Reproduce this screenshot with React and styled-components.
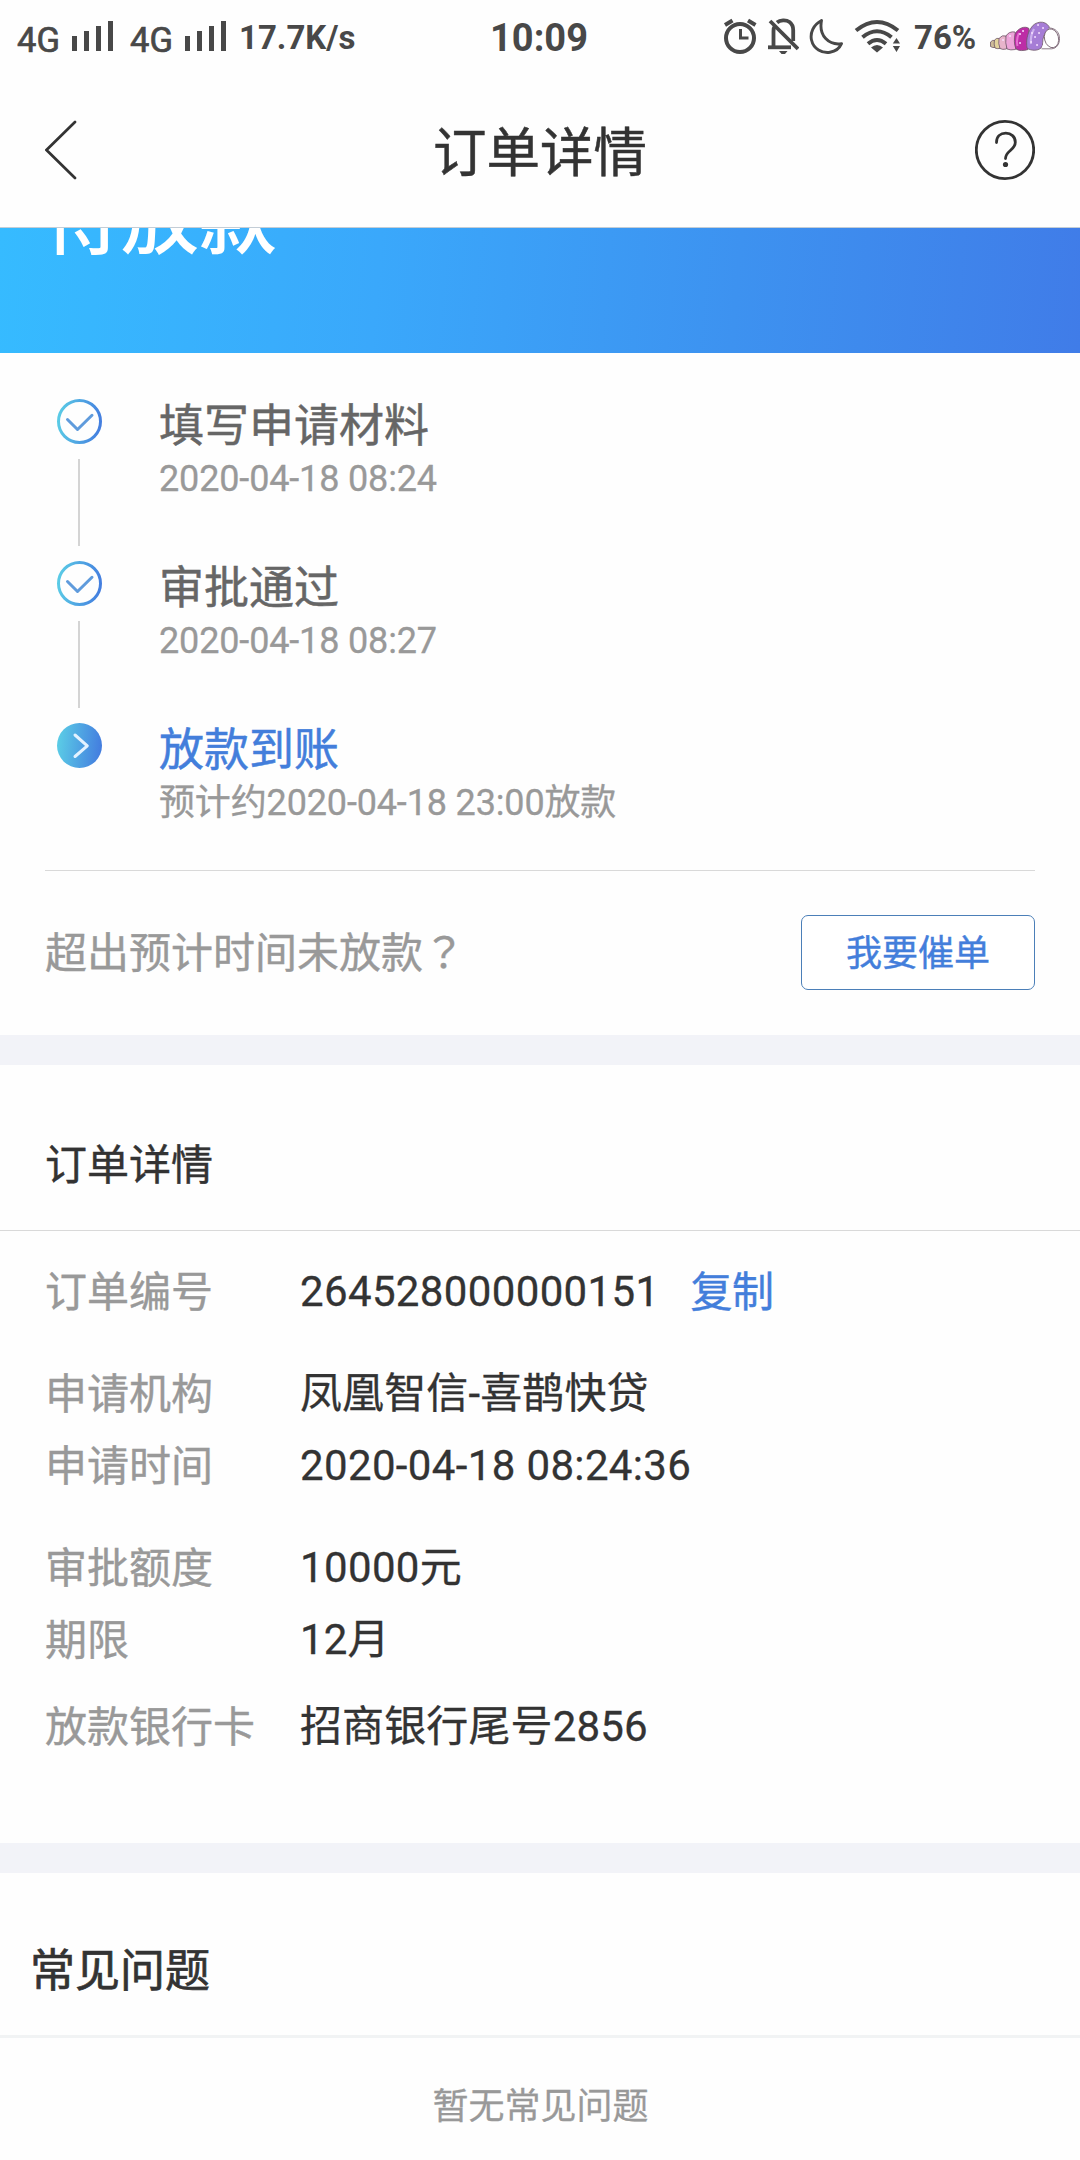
import React from "react";
import styled, { createGlobalStyle } from "styled-components";

const Global = createGlobalStyle`
  * { box-sizing: border-box; }
  body { margin: 0; background: #fefefe; }
`;

const Page = styled.div`
  width: 1080px;
  height: 2160px;
  overflow: hidden;
  display: flex;
  flex-direction: column;
  background: #fefefe;
  color: #333;
  font-family: Roboto, "Noto Sans CJK SC", sans-serif;
  white-space: nowrap;
`;

const StatusBar = styled.div`
  height: 75px;
  flex: none;
  display: grid;
  grid-template-columns: 1fr auto 1fr;
  align-items: start;
  padding: 0 20px 0 17px;
  color: #484848;
`;

const StatusSide = styled.div`
  display: flex;
  align-items: flex-start;
  justify-content: ${(p) => (p.$end ? "flex-end" : "flex-start")};
  height: 75px;
`;

const StatusText = styled.span`
  font-size: ${(p) => p.$size}px;
  font-weight: ${(p) => p.$weight || 700};
  line-height: 76px;
  width: ${(p) => (p.$width ? `${p.$width}px` : "auto")};
  margin-left: ${(p) => p.$gap || 0}px;
`;

const NetworkText = styled(StatusText)`
  line-height: 80px;
  -webkit-text-stroke: 0.7px #484848;
`;

const SignalBars = styled.div`
  display: flex;
  align-items: flex-end;
  gap: 7px;
  height: 51px;
  margin: 0 17px 0 11px;
`;

const SignalBar = styled.i`
  width: 5px;
  height: ${(p) => p.$h}px;
  background: #484848;
`;

const StatusIcon = styled.svg`
  display: block;
  flex: none;
  height: 75px;
  width: ${(p) => p.$w}px;
  margin-left: ${(p) => p.$gap || 0}px;
  fill: none;
  stroke: #484848;
`;

const NavBar = styled.header`
  flex: none;
  height: 153px;
  display: grid;
  grid-template-columns: 60px 1fr 60px;
  align-items: start;
  padding: 0 45px;
  border-bottom: 1px solid #c3cdd6;
`;

const NavIcon = styled.svg`
  display: block;
  width: 60px;
  height: 150px;
  fill: none;
  stroke: #333;
`;

const NavTitle = styled.h1`
  margin: 0;
  font-size: 53.5px;
  font-weight: 400;
  line-height: 158px;
  text-align: center;
  -webkit-text-stroke: 0.5px #333;
`;

const Banner = styled.section`
  flex: none;
  height: 125px;
  overflow: hidden;
  padding: 0 43px;
  background: linear-gradient(95deg, #36bbff 0%, #3aa8fb 35%, #3d92f0 68%, #407ce8 100%);
`;

const BannerTitle = styled.h2`
  margin: -45px 0 0;
  color: #fff;
  font-size: 78px;
  font-weight: 500;
  line-height: 78px;
`;

const Steps = styled.ol`
  flex: none;
  list-style: none;
  margin: 0;
  padding: 46px 57px 0;
  height: 517px;
`;

const Step = styled.li`
  display: flex;
  gap: 57px;
  height: 162px;
`;

const StepRail = styled.div`
  width: 45px;
  display: flex;
  flex-direction: column;
  align-items: center;
  gap: 15px;
`;

const StepMark = styled.svg`
  display: block;
  width: 45px;
  height: 45px;
  fill: none;
`;

const StepLine = styled.i`
  width: 2px;
  height: 87px;
  margin-right: 1px;
  background: #d4d4d4;
`;

const StepTitle = styled.div`
  font-size: 45px;
  line-height: 56px;
  color: ${(p) => (p.$active ? "#437edb" : "#666")};
  -webkit-text-stroke: 0.5px currentColor;
`;

const StepTime = styled.div`
  font-size: 36px;
  line-height: 49px;
  letter-spacing: -0.15px;
  color: #999;
  -webkit-text-stroke: 0.3px currentColor;
`;

const UrgeRow = styled.div`
  flex: none;
  height: 165px;
  margin: 0 45px;
  padding-top: 44px;
  border-top: 1px solid #d9d9d9;
  display: flex;
  justify-content: space-between;
  align-items: flex-start;
`;

const UrgeText = styled.span`
  font-size: 42px;
  line-height: 77px;
  color: #999;
  -webkit-text-stroke: 0.4px currentColor;
`;

const FullWidthMark = styled.span`
  font-family: "Noto Sans CJK TC", sans-serif;
  line-height: 1;
`;

const UrgeButton = styled.button`
  width: 234px;
  height: 75px;
  padding: 4px 0 0;
  border: 1px solid #4b7fb8;
  border-radius: 7px;
  background: #fff;
  color: #437edb;
  font: 400 36px/69px Roboto, "Noto Sans CJK SC", sans-serif;
  -webkit-text-stroke: 0.4px currentColor;
`;

const Band = styled.div`
  flex: none;
  height: 30px;
  background: #f2f3f8;
`;

const SectionTitle = styled.h3`
  flex: none;
  margin: 0;
  height: 166px;
  padding: 35px 45px 0;
  border-bottom: 1px solid #d9d9d9;
  font-size: 42px;
  font-weight: 400;
  line-height: 131px;
  -webkit-text-stroke: 0.4px currentColor;
`;

const Details = styled.dl`
  flex: none;
  margin: 0;
  height: 612px;
  padding: 25px 45px 0;
`;

const DetailRow = styled.div`
  display: flex;
  height: 72px;
  margin-bottom: ${(p) => p.$after || 0}px;
  font-size: 42px;
  line-height: 72px;
`;

const DetailLabel = styled.dt`
  width: 255px;
  line-height: 73px;
  color: #999;
  -webkit-text-stroke: 0.4px currentColor;
`;

const DetailValue = styled.dd`
  margin: 0;
  display: flex;
  letter-spacing: ${(p) => (p.$numeric ? 0.36 : 0.12)}px;
  -webkit-text-stroke: 0.3px currentColor;
`;

const CopyLink = styled.a`
  margin-left: 31px;
  line-height: 73px;
  letter-spacing: -0.5px;
  color: #437edb;
  -webkit-text-stroke: 0.4px currentColor;
`;

const FaqTitle = styled.h3`
  flex: none;
  margin: 0;
  height: 165px;
  padding: 36px 30px 0;
  border-bottom: 3px solid #f1f3f4;
  font-size: 45px;
  font-weight: 400;
  line-height: 125px;
  -webkit-text-stroke: 0.7px #333;
`;

const FaqEmpty = styled.p`
  margin: 0;
  padding: 15px 0 0 1px;
  font-size: 36px;
  line-height: 109px;
  text-align: center;
  color: #999;
  -webkit-text-stroke: 0.3px currentColor;
`;

const steps = [
  { title: "填写申请材料", time: "2020-04-18 08:24" },
  { title: "审批通过", time: "2020-04-18 08:27" },
  { title: "放款到账", time: "预计约2020-04-18 23:00放款", active: true },
];

const details = [
  { label: "订单编号", value: "264528000000151", numeric: true, copy: true, after: 30 },
  { label: "申请机构", value: "凤凰智信-喜鹊快贷" },
  { label: "申请时间", value: "2020-04-18 08:24:36", numeric: true, after: 30 },
  { label: "审批额度", value: "10000元", numeric: true },
  { label: "期限", value: "12月", after: 15 },
  { label: "放款银行卡", value: "招商银行尾号2856" },
];

function Signal() {
  return (
    <>
      <NetworkText $size={34.5} $weight={400} $width={44}>4G</NetworkText>
      <SignalBars>
        {[15, 20, 25, 30].map((h) => (
          <SignalBar key={h} $h={h} />
        ))}
      </SignalBars>
    </>
  );
}

function AlarmIcon() {
  return (
    <StatusIcon $w={34} viewBox="723 0 34 75" strokeWidth="4">
      <circle cx="740" cy="38" r="14" />
      <path d="M740.5 29v9h8" strokeWidth="3" />
      <path d="M725 25l7.500-4.500M748 20.500l7.500 4.500" />
    </StatusIcon>
  );
}

function MutedBellIcon() {
  return (
    <StatusIcon $w={32} $gap={10} viewBox="767 0 32 75" strokeWidth="3.8">
      <path d="M773.500 47V31q0-3 1.500-5M777 22.500c3-2.500 9-3 12.500-.5 2.500 2 3.700 4.500 3.700 8V41" />
      <path d="M768 47.300h23" />
      <path d="M770 21l28 28" />
      <path d="M779 51h8.500l-2.500 3h-3.500z" fill="#484848" stroke="none" />
    </StatusIcon>
  );
}

function MoonIcon() {
  return (
    <StatusIcon $w={34} $gap={10} viewBox="809 0 34 75" strokeWidth="2.9" strokeLinejoin="round">
      <path d="M821.500 20.500C813 25 810 33 811.500 40c2 9 10.500 13.500 18.500 12.300 5.500-.8 9.500-4 11.500-8.600C829 45.500 818.500 36 821.500 20.500z" />
    </StatusIcon>
  );
}

function WifiIcon() {
  return (
    <StatusIcon $w={46} $gap={11} viewBox="854 0 46 75" strokeWidth="4">
      <path d="M856 30.500q21-17 42 0M862.500 37.300q14.500-12 29 0M868 43.800q9-7.500 18 0" />
      <path d="M871 47.500q6-5 12 0l-6 5z" fill="#484848" stroke="none" />
      <path d="M892.800 43.500l3.700-5.500 3.500 5.500zM892.800 46l3.700 6 3.500-6z" fill="#484848" stroke="none" />
    </StatusIcon>
  );
}

function ShellBattery() {
  return (
    <StatusIcon $w={71} $gap={14} viewBox="989 0 71 75" strokeWidth="0.800">
      <g stroke="#6f5868">
        <path d="M990.500 42q2-2.500 4.500-1.500l.5 7q-3 .5-5-1z" fill="#cdbb98" />
        <path d="M994.500 40q2-2.500 5-1.500 2 5 .5 10-3 .5-5-.5-1.500-4-.5-8z" fill="#e2d29c" />
        <path d="M999 38.500q3-4 7-2.500 2.500 6 .5 13-4 1-6.500-.5-2-5-1-10z" fill="#e8b4cb" />
        <path d="M1006 36q3-5 9-4 3 8 .5 17.500-5 1-8.500-.5-2-6-1-13z" fill="#eda5d9" />
        <path d="M1015 34c3-6 10-8.500 14-5.500l-1 21c-4 1.500-9 1.500-12-.5-2-4.500-2-10-1-15z" fill="#bd2da6" />
        <path d="M1027 48c-1-7 0-14 4-20 4-7 14-8 18-1.500 1 3-3 5-5 9-2.500 6 0 9-3 12.500-3.500 3-10 3-14 0z" fill="#a67dd6" />
        <path d="M1049 28c6 0 10.500 4 10.500 10.500 0 6-3 10-8 10.300h-10" fill="#fff" />
        <ellipse cx="1051.500" cy="38.300" rx="7" ry="9.500" fill="#fff" transform="rotate(-14 1051.500 38.300)" />
      </g>
      <path d="M1019 33q-3 6-1.500 13" stroke="#e66fd0" strokeWidth="2" />
      <path d="M1034 29q-4 7-3 15" stroke="#cdb2ee" strokeWidth="2.200" />
      <g stroke="#f7e0ff" strokeLinecap="round" strokeWidth="1.800">
        <path d="M1032 33h.1M1038 25h.1M1043 28h.1M1035 37h.1M1039 33h.1M1031 42h.1M1037 45h.1M1020 34h.1M1023 31h.1M1020 43h.1M1010 36h.1M1003 40h.1" />
      </g>
    </StatusIcon>
  );
}

function StepIcon({ active, id }) {
  return (
    <StepMark viewBox="0 0 45 45" strokeLinecap="round" strokeLinejoin="round">
      <defs>
        <linearGradient id={id} gradientUnits="userSpaceOnUse" x1="0" y1="20" x2="45" y2="25">
          <stop offset="0" stopColor="#5bcde6" />
          <stop offset="1" stopColor="#437cdf" />
        </linearGradient>
      </defs>
      {active ? (
        <>
          <circle cx="22.500" cy="22.500" r="22.500" fill={`url(#${id})`} />
          <path d="M18 12l12.300 10.800L18 33.500" stroke="#e3f2ff" strokeWidth="3" />
        </>
      ) : (
        <g stroke={`url(#${id})`} strokeWidth="3">
          <circle cx="22.500" cy="22.500" r="21" />
          <path d="M10.500 20.500l10 10L35 16.300" stroke="#5f9bdc" />
        </g>
      )}
    </StepMark>
  );
}

export default function App() {
  return (
    <Page>
      <Global />
      <StatusBar>
        <StatusSide>
          <Signal />
          <Signal />
          <StatusText $size={33} $gap={-4}>17.7K/s</StatusText>
        </StatusSide>
        <StatusText $size={38} $gap={1}>10:09</StatusText>
        <StatusSide $end>
          <AlarmIcon />
          <MutedBellIcon />
          <MoonIcon />
          <WifiIcon />
          <StatusText $size={33} $gap={14} $width={61}>76%</StatusText>
          <ShellBattery />
        </StatusSide>
      </StatusBar>

      <NavBar>
        <NavIcon viewBox="45 75 60 150">
          <path d="M75 122L46.500 150 75 178" strokeWidth="2.700" strokeLinecap="round" />
        </NavIcon>
        <NavTitle>订单详情</NavTitle>
        <NavIcon viewBox="975 75 60 150">
          <circle cx="1005" cy="150" r="28.700" strokeWidth="2.800" />
          <path
            d="M996.500 142.500c0-6 4-9.300 9.300-9.300s9.500 3.500 9.500 9c0 8-9.800 8.500-9.800 16.300"
            strokeWidth="2.800"
            strokeLinecap="round"
          />
          <circle cx="1005.500" cy="164.500" r="2.600" fill="#333" stroke="none" />
        </NavIcon>
      </NavBar>

      <Banner>
        <BannerTitle>待放款</BannerTitle>
      </Banner>

      <Steps>
        {steps.map((s, i) => (
          <Step key={s.title}>
            <StepRail>
              <StepIcon active={s.active} id={`step-${i}`} />
              {!s.active && <StepLine />}
            </StepRail>
            <div>
              <StepTitle $active={s.active}>{s.title}</StepTitle>
              <StepTime>{s.time}</StepTime>
            </div>
          </Step>
        ))}
      </Steps>

      <UrgeRow>
        <UrgeText>
          超出预计时间未放款<FullWidthMark>？</FullWidthMark>
        </UrgeText>
        <UrgeButton>我要催单</UrgeButton>
      </UrgeRow>

      <Band />
      <SectionTitle>订单详情</SectionTitle>
      <Details>
        {details.map((d) => (
          <DetailRow key={d.label} $after={d.after}>
            <DetailLabel>{d.label}</DetailLabel>
            <DetailValue $numeric={d.numeric}>
              {d.value}
              {d.copy && <CopyLink>复制</CopyLink>}
            </DetailValue>
          </DetailRow>
        ))}
      </Details>

      <Band />
      <FaqTitle>常见问题</FaqTitle>
      <FaqEmpty>暂无常见问题</FaqEmpty>
    </Page>
  );
}
